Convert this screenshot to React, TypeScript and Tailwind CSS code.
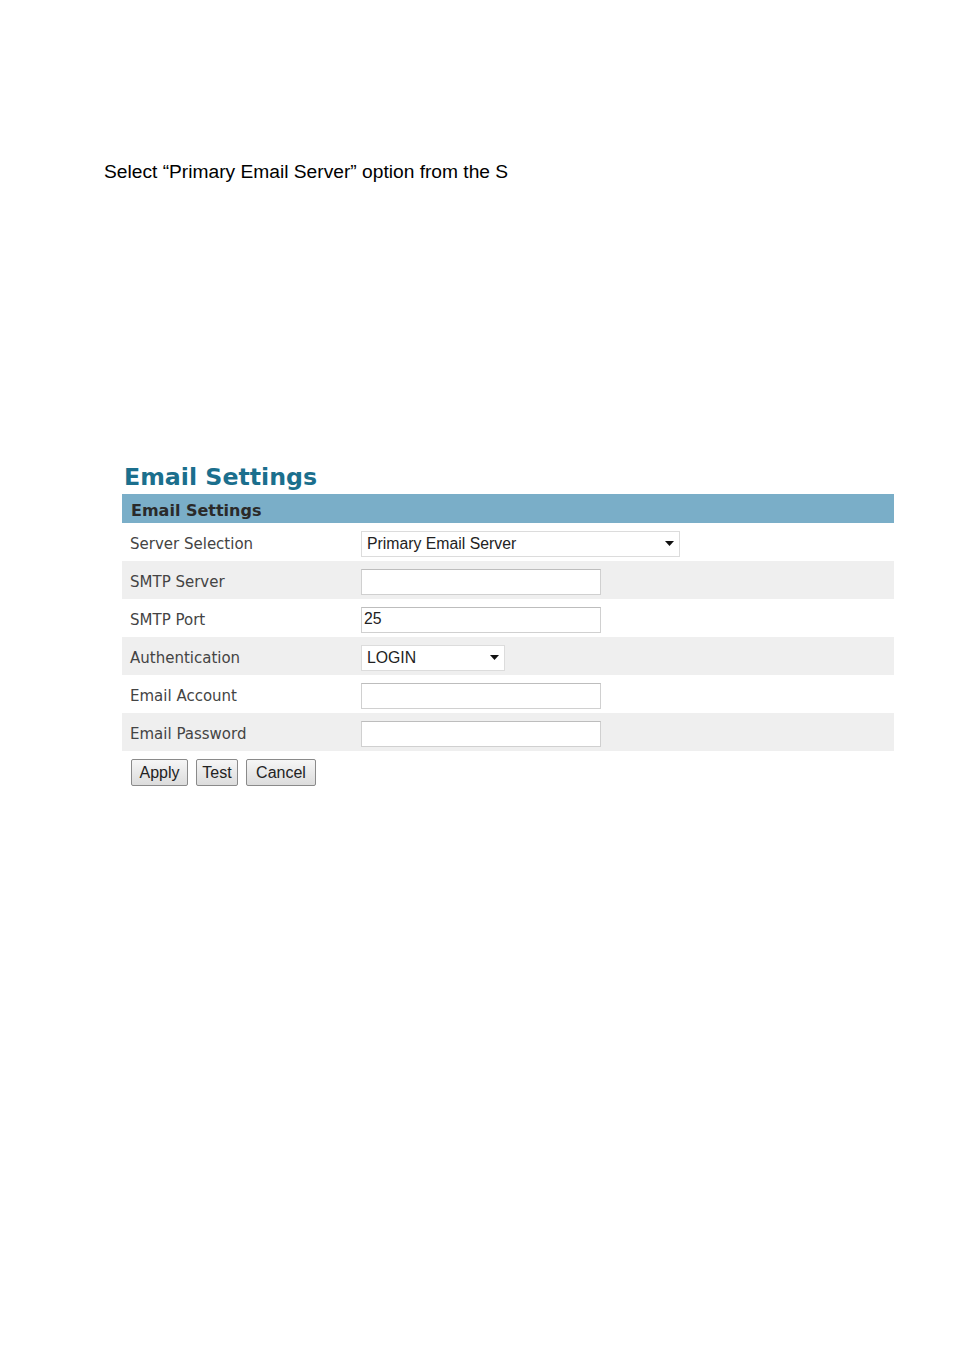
import { useState } from "react"

const rows = [
  { label: "Server Selection", kind: "select-wide", value: "Primary Email Server" },
  { label: "SMTP Server", kind: "text", value: "" },
  { label: "SMTP Port", kind: "text", value: "25" },
  { label: "Authentication", kind: "select", value: "LOGIN" },
  { label: "Email Account", kind: "text", value: "" },
  { label: "Email Password", kind: "text", value: "" },
]

function Caret() {
  return (
    <svg width="9" height="5" viewBox="0 0 9 5" className="shrink-0">
      <path d="M0 0h9L4.5 5z" fill="#111" />
    </svg>
  )
}

function Field({ kind, value }: { kind: string; value: string }) {
  if (kind === "select-wide" || kind === "select") {
    return (
      <div
        className={`flex h-[26px] items-center justify-between border border-[#dcdcdc] bg-white pl-[5px] pr-[5px] text-[15.8px] text-[#222] ${
          kind === "select-wide" ? "w-[319px]" : "w-[144px]"
        }`}
        style={{ fontFamily: '"Liberation Sans", Arial, sans-serif' }}
      >
        <span>{value}</span>
        <Caret />
      </div>
    )
  }
  return (
    <div
      className="flex h-[26px] w-[240px] items-center border border-[#d0d0d0] border-t-[#bdbdbd] bg-white pb-[2px] pl-[2px] text-[15.8px] text-[#222]"
      style={{ fontFamily: '"Liberation Sans", Arial, sans-serif' }}
    >
      {value}
    </div>
  )
}

function Btn({ children, w }: { children: string; w: string }) {
  return (
    <button
      className={`flex h-[27px] ${w} items-center justify-center rounded-[2px] border border-[#8a8a8a] bg-gradient-to-b from-[#f6f6f6] to-[#dcdcdc] text-[16px] text-[#222]`}
      style={{ fontFamily: '"Liberation Sans", Arial, sans-serif' }}
    >
      {children}
    </button>
  )
}

export default function App() {
  const [server] = useState("Primary Email Server")

  return (
    <div className="h-[1350px] w-[954px] bg-white">
      <div className="pl-[104px] pt-[160px]">
        <p
          className="text-[19.2px] leading-[24px] text-black"
          style={{ fontFamily: '"Liberation Sans", Arial, sans-serif' }}
        >
          Select “{server}” option from the S
        </p>
      </div>

      <div className="ml-[122px] mt-[276px] w-[772px]" style={{ fontFamily: '"DejaVu Sans", Verdana, sans-serif' }}>
        <h1 className="pl-[2px] text-[23.7px] font-bold leading-[34px] text-[#1b6f8d]">Email Settings</h1>
        <div className="flex h-[29px] items-center bg-[#7aaec8] pl-[9px] pt-[5px] text-[16px] font-bold text-[#2a2a2a]">
          Email Settings
        </div>
        {rows.map((r, i) => (
          <div
            key={r.label}
            className={`flex h-[38px] items-center pt-[3px] ${i % 2 === 1 ? "bg-[#efefef]" : "bg-white"}`}
          >
            <div className="w-[239px] pl-[8px] pt-[2px] text-[15px] text-[#444]">{r.label}</div>
            <Field kind={r.kind} value={r.value} />
          </div>
        ))}
        <div className="flex gap-[8px] pl-[9px] pt-[8px]">
          <Btn w="w-[57px]">Apply</Btn>
          <Btn w="w-[42px]">Test</Btn>
          <Btn w="w-[70px]">Cancel</Btn>
        </div>
      </div>
    </div>
  )
}
